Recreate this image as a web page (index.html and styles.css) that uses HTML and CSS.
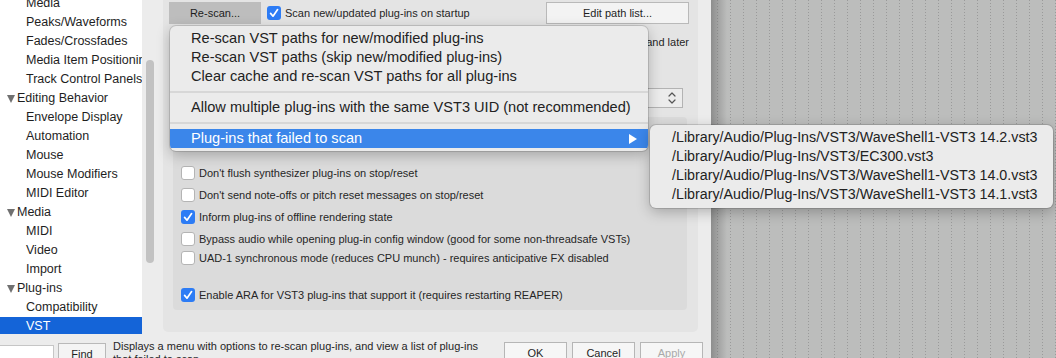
FILE: index.html
```html
<!DOCTYPE html>
<html lang="en">
<head>
    <meta charset="UTF-8">
    <title>REAPER Preferences - VST</title>
    <link rel="stylesheet" href="styles.css">
</head>
<body>
    <div class="app">
        <div class="window">
            <div class="main">
                <!-- arvore de categorias -->
                <div class="tree-col">
                    <div class="tree">
                        <div class="tree-list">
                            <div class="item child">Media</div>
                            <div class="item child">Peaks/Waveforms</div>
                            <div class="item child">Fades/Crossfades</div>
                            <div class="item child">Media Item Positioning</div>
                            <div class="item child">Track Control Panels</div>
                            <div class="item parent"><span class="twisty"></span>Editing Behavior</div>
                            <div class="item child">Envelope Display</div>
                            <div class="item child">Automation</div>
                            <div class="item child">Mouse</div>
                            <div class="item child">Mouse Modifiers</div>
                            <div class="item child">MIDI Editor</div>
                            <div class="item parent"><span class="twisty"></span>Media</div>
                            <div class="item child">MIDI</div>
                            <div class="item child">Video</div>
                            <div class="item child">Import</div>
                            <div class="item parent"><span class="twisty"></span>Plug-ins</div>
                            <div class="item child">Compatibility</div>
                            <div class="item child selected">VST</div>
                        </div>
                    </div>
                    <div class="scroll"><div class="thumb"></div></div>
                </div>

                <!-- pagina VST -->
                <div class="pane">
                    <div class="row-top">
                        <button class="btn rescan">Re-scan...</button>
                        <div class="check">
                            <span class="box on"><svg width="14" height="14" viewBox="0 0 14 14"><path d="M3.6 7.4 L6 10.2 L10.6 3.6" fill="none" stroke="#fff" stroke-width="1.7" stroke-linecap="round" stroke-linejoin="round"/></svg></span>
                            Scan new/updated plug-ins on startup
                        </div>
                        <button class="btn edit">Edit path list...</button>
                    </div>
                    <div class="note">VST3 plug-ins may be loaded now and later</div>
                    <div class="select-row">
                        <div class="select">
                            <svg width="10" height="16" viewBox="0 0 10 16"><path d="M2 6 L5 3 L8 6 M2 10 L5 13 L8 10" fill="none" stroke="#555" stroke-width="1.2" stroke-linecap="round" stroke-linejoin="round"/></svg>
                        </div>
                    </div>
                    <div class="group">
                        <div class="opt">
                            <span class="box"></span>
                            Don't flush synthesizer plug-ins on stop/reset
                        </div>
                        <div class="opt">
                            <span class="box"></span>
                            Don't send note-offs or pitch reset messages on stop/reset
                        </div>
                        <div class="opt">
                            <span class="box on"><svg width="14" height="14" viewBox="0 0 14 14"><path d="M3.6 7.4 L6 10.2 L10.6 3.6" fill="none" stroke="#fff" stroke-width="1.7" stroke-linecap="round" stroke-linejoin="round"/></svg></span>
                            Inform plug-ins of offline rendering state
                        </div>
                        <div class="opt">
                            <span class="box"></span>
                            Bypass audio while opening plug-in config window (good for some non-threadsafe VSTs)
                        </div>
                        <div class="opt short">
                            <span class="box"></span>
                            UAD-1 synchronous mode (reduces CPU munch) - requires anticipative FX disabled
                        </div>
                        <div class="opt spaced">
                            <span class="box on"><svg width="14" height="14" viewBox="0 0 14 14"><path d="M3.6 7.4 L6 10.2 L10.6 3.6" fill="none" stroke="#fff" stroke-width="1.7" stroke-linecap="round" stroke-linejoin="round"/></svg></span>
                            Enable ARA for VST3 plug-ins that support it (requires restarting REAPER)
                        </div>
                    </div>
                </div>
            </div>

            <!-- barra inferior -->
            <div class="bottom">
                <div class="find-input"></div>
                <button class="btn find">Find</button>
                <div class="desc">Displays a menu with options to re-scan plug-ins, and view a list of plug-ins<br>that failed to scan.</div>
                <div class="actions">
                    <button class="btn act">OK</button>
                    <button class="btn act">Cancel</button>
                    <button class="btn act disabled">Apply</button>
                </div>
            </div>
        </div>
        <div class="desk"></div>
    </div>

    <!-- menu aberto do botao Re-scan -->
    <div class="menu">
        <div class="mi">Re-scan VST paths for new/modified plug-ins</div>
        <div class="mi">Re-scan VST paths (skip new/modified plug-ins)</div>
        <div class="mi">Clear cache and re-scan VST paths for all plug-ins</div>
        <div class="sep"></div>
        <div class="mi">Allow multiple plug-ins with the same VST3 UID (not recommended)</div>
        <div class="sep"></div>
        <div class="mi hot">Plug-ins that failed to scan<span class="arrow"></span></div>
    </div>

    <div class="submenu">
        <div class="mi">/Library/Audio/Plug-Ins/VST3/WaveShell1-VST3 14.2.vst3</div>
        <div class="mi">/Library/Audio/Plug-Ins/VST3/EC300.vst3</div>
        <div class="mi">/Library/Audio/Plug-Ins/VST3/WaveShell1-VST3 14.0.vst3</div>
        <div class="mi">/Library/Audio/Plug-Ins/VST3/WaveShell1-VST3 14.1.vst3</div>
    </div>
</body>
</html>
```

FILE: styles.css
```css
body {
    margin: 0;
    width: 1056px;
    height: 358px;
    overflow: hidden;
    position: relative;
    background-color: #ececec;
    color: #262626;
    font-family: "Liberation Sans", Arial, sans-serif;
}

.app {
    display: flex;
    height: 358px;
}

.window {
    width: 711px;
    display: flex;
    flex-direction: column;
}

.main {
    display: flex;
    height: 342px;
}

/* arvore */
.tree-col {
    display: flex;
    width: 163px;
}

.tree {
    width: 142px;
    height: 334px;
    background-color: #fff;
    overflow: hidden;
    font-size: 12.5px;
}

.tree-list {
    margin-top: -6px;
}

.item {
    height: 19px;
    line-height: 19px;
    white-space: nowrap;
    color: #1e1e1e;
}

.child {
    padding-left: 26px;
}

.parent {
    display: flex;
    align-items: center;
    padding-left: 7px;
}

.twisty {
    width: 0;
    height: 0;
    border-left: 4.5px solid transparent;
    border-right: 4.5px solid transparent;
    border-top: 8px solid #707070;
    margin-right: 2px;
}

.selected {
    background-color: #1464d8;
    color: #fff;
}

.scroll {
    width: 21px;
}

.thumb {
    margin: 60px 0 0 4px;
    width: 8px;
    height: 203px;
    border-radius: 4px;
    background-color: #c2c2c2;
}

/* pagina */
.pane {
    width: 535px;
    height: 332px;
    background-color: #e4e4e4;
    border-radius: 0 0 5px 5px;
    display: flex;
    flex-direction: column;
    font-size: 11px;
}

.btn {
    font-family: inherit;
    font-size: 11px;
    color: #1e1e1e;
    height: 22px;
    padding: 0;
    margin: 0;
    box-sizing: border-box;
}

.row-top {
    display: flex;
    align-items: center;
    height: 22px;
    margin-top: 2px;
    padding: 0 9px 0 6px;
}

.rescan {
    width: 92px;
    background-color: #bdbdbd;
    border: none;
}

.check {
    display: flex;
    align-items: center;
    gap: 4px;
    margin-left: 6px;
}

.edit {
    margin-left: auto;
    width: 143px;
    background-color: #f3f3f3;
    border: 1px solid #b9b9b9;
}

.box {
    width: 14px;
    height: 14px;
    box-sizing: border-box;
    border: 1px solid #b4b4b4;
    border-radius: 3px;
    background-color: #fff;
    flex-shrink: 0;
}

.box.on {
    border: none;
    background-color: #2d7cf5;
}

.box svg {
    display: block;
}

.note {
    margin-top: 11px;
    line-height: 14px;
    text-align: right;
    padding-right: 9px;
}

.select-row {
    display: flex;
    justify-content: flex-end;
    margin-top: 39px;
    padding-right: 15px;
}

.select {
    width: 280px;
    height: 20px;
    box-sizing: border-box;
    border: 1px solid #b3b3b3;
    background-color: #ececec;
    display: flex;
    align-items: center;
    justify-content: flex-end;
    padding-right: 5px;
}

.group {
    margin: 9px 0 0 10px;
    width: 514px;
    height: 193px;
    box-sizing: border-box;
    padding: 45px 0 0 8px;
    background-color: #dbdbdb;
    border-radius: 4px;
}

.opt {
    display: flex;
    align-items: center;
    gap: 4px;
    height: 22px;
    white-space: nowrap;
}

.opt.short {
    height: 16px;
}

.opt.spaced {
    margin-top: 18px;
}

/* barra inferior */
.bottom {
    display: flex;
    height: 16px;
    font-size: 11px;
}

.find-input {
    width: 54px;
    height: 14px;
    margin-top: 3px;
    box-sizing: border-box;
    background-color: #fff;
    border: 1px solid #c6c6c6;
    border-left: none;
}

.find {
    width: 48px;
    margin: 1px 0 0 4px;
    background-color: #f4f4f4;
    border: 1px solid #b9b9b9;
}

.desc {
    margin: -2px 0 0 7px;
    line-height: 13px;
    white-space: nowrap;
}

.actions {
    display: flex;
    gap: 5px;
    margin: 0 8px 0 auto;
}

.act {
    width: 63px;
    background-color: #f6f6f6;
    border: 1px solid #b6b6b6;
}

.act.disabled {
    color: #a9a9a9;
}

/* area cinza da direita */
.desk {
    flex: 1;
    background-color: #bcbdbc;
    background-image:
        linear-gradient(to right, rgba(110, 110, 110, 0.6), rgba(188, 189, 188, 0) 16px),
        repeating-linear-gradient(to bottom, transparent 0 1px, #bcbdbc 1px 3px),
        repeating-linear-gradient(to right, transparent 0 6px, #9a9a9a 6px 7px, transparent 7px 13px);
}

/* menus */
.menu, .submenu {
    position: absolute;
    background-color: #ebebeb;
    border-radius: 6px;
    box-shadow: 0 0 0 1px rgba(0, 0, 0, 0.13), 0 4px 14px rgba(0, 0, 0, 0.25);
    color: #222;
    overflow: hidden;
}

.menu {
    left: 170px;
    top: 26px;
    width: 478px;
    padding: 3px 0;
    font-size: 14.6px;
}

.submenu {
    left: 650px;
    top: 125px;
    width: 403px;
    padding: 3px 0 4px;
    font-size: 14.25px;
}

.mi {
    height: 19px;
    line-height: 19px;
    padding-left: 21px;
    white-space: nowrap;
}

.submenu .mi {
    padding-left: 22px;
}

.sep {
    height: 2px;
    margin: 5px 0;
    background-color: #d7d7d7;
}

.mi.hot {
    background-color: #3b86ea;
    color: #fff;
    display: flex;
    align-items: center;
    justify-content: space-between;
    padding-right: 11px;
}

.arrow {
    width: 0;
    height: 0;
    border-left: 8px solid #fff;
    border-top: 5px solid transparent;
    border-bottom: 5px solid transparent;
}
```
